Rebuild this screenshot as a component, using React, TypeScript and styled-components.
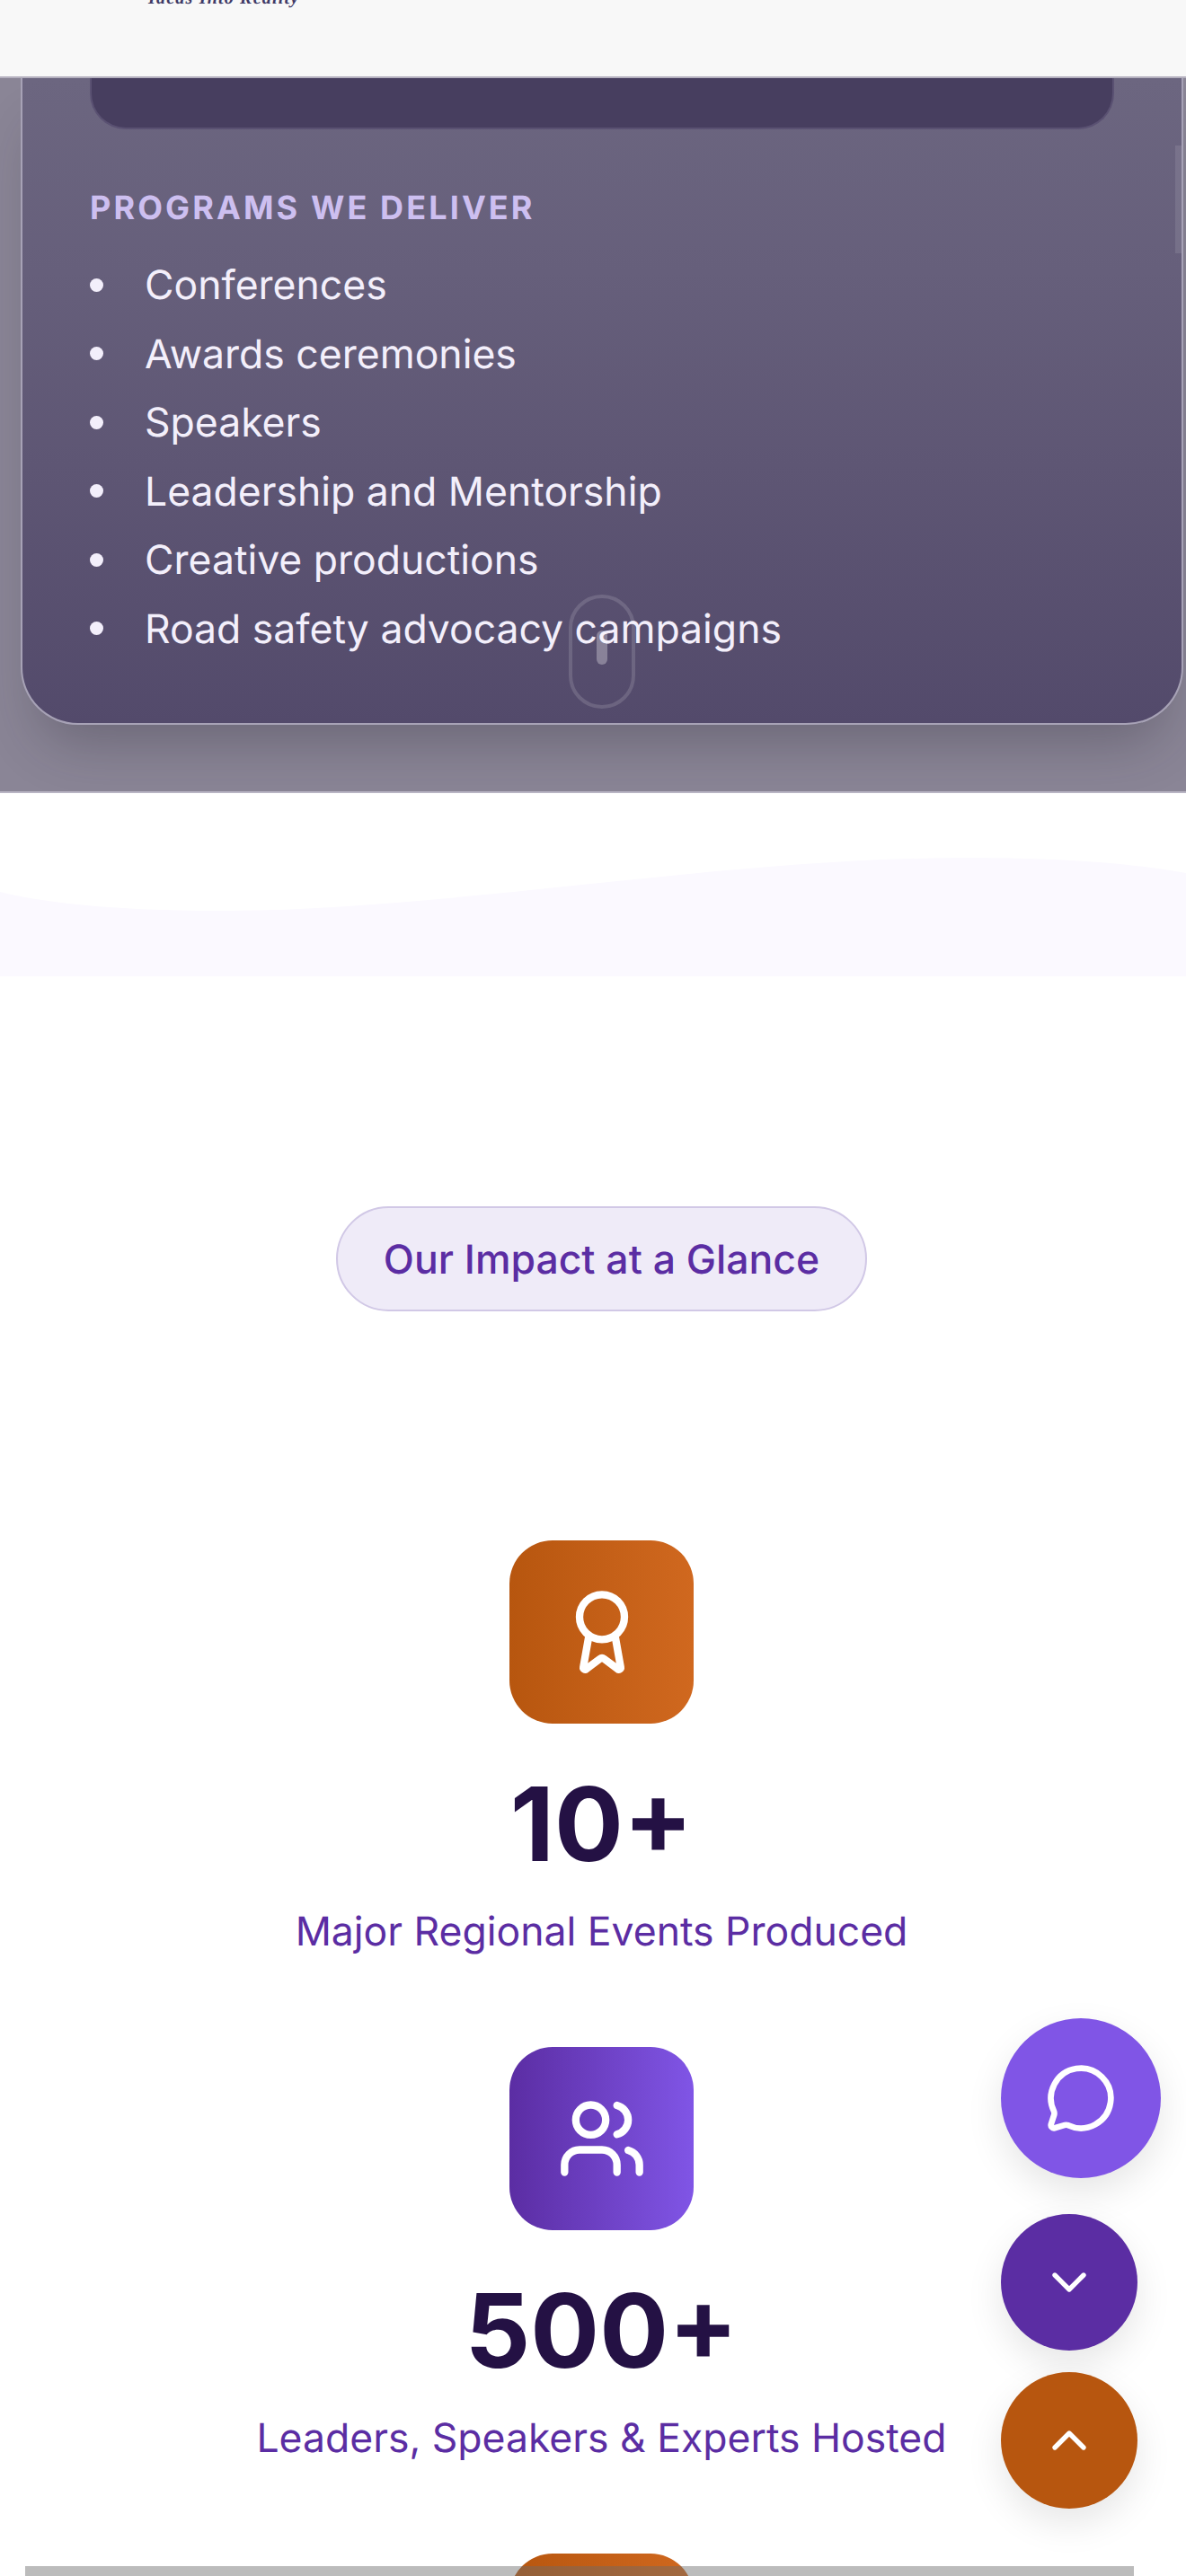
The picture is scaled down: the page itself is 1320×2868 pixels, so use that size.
import React from "react";
import styled, { createGlobalStyle } from "styled-components";
import { Award, Users, MessageCircle, ChevronDown, ChevronUp } from "lucide-react";

const Global = createGlobalStyle`
  html, body { margin: 0; padding: 0; background: #fff; }
  body { font-family: Inter, "Noto Sans", sans-serif; text-rendering: geometricPrecision; }
  #root { height: 2868px; overflow: hidden; position: relative; }
`;

const Page = styled.div`
  position: relative;
  width: 1320px;
  height: 2868px;
  overflow: hidden;
  background: #fff;
`;

const Header = styled.header`
  position: relative;
  height: 85px;
  background: #f8f8f8;
  border-bottom: 2px solid #b5b1bf;
  box-sizing: content-box;
  overflow: hidden;
  z-index: 2;
`;

const Tagline = styled.div`
  position: absolute;
  left: 165px;
  top: -12px;
  font: italic 700 20px "Liberation Serif", serif;
  letter-spacing: 1.2px;
  line-height: 20px;
  white-space: nowrap;
  color: #3f3a66;
`;

const HeroBand = styled.section`
  height: 796px;
  box-sizing: border-box;
  padding: 0 3px 0 23px;
  background: #8a8596;
  border-bottom: 2px solid #b9b5c4;
  overflow: hidden;
`;

const ProgramCard = styled.div`
  position: relative;
  height: 720px;
  box-sizing: border-box;
  padding: 0 75px;
  background: linear-gradient(180deg, #6c6680 0%, #665f7b 30%, #5e5674 60%, #534a6b 100%);
  border: 2px solid #a7a2b6;
  border-top: none;
  border-radius: 0 0 64px 64px;
  box-shadow: 0 40px 60px -20px rgba(40, 36, 50, 0.3);
`;

const InnerPanel = styled.div`
  height: 57px;
  box-sizing: border-box;
  background: #473e5f;
  border: 2px solid #5a5172;
  border-top: none;
  border-radius: 0 0 40px 40px;
`;

const SectionLabel = styled.h3`
  margin: 65px 0 26px;
  font-size: 36px;
  line-height: 44px;
  font-weight: 700;
  letter-spacing: 3.12px;
  text-transform: uppercase;
  color: #cdbff0;
`;

const ProgramList = styled.ul`
  margin: 0;
  padding: 0;
  list-style: none;
`;

const ProgramItem = styled.li`
  display: flex;
  align-items: center;
  gap: 46px;
  height: 76.5px;
  font-size: 44.5px;
  color: #f3effb;
  &::before {
    content: "";
    width: 15px;
    height: 15px;
    border-radius: 50%;
    background: #f3effb;
    flex: none;
  }
`;

const Mouse = styled.div`
  position: absolute;
  left: 50%;
  bottom: 16px;
  width: 74px;
  height: 127px;
  box-sizing: border-box;
  transform: translateX(-50%);
  display: flex;
  justify-content: center;
  padding-top: 36px;
  border: 4px solid rgba(255, 255, 255, 0.14);
  border-radius: 37px;
`;

const MouseDot = styled.span`
  width: 12px;
  height: 38px;
  border-radius: 6px;
  background: rgba(255, 255, 255, 0.3);
`;

const ScrollThumb = styled.div`
  position: absolute;
  right: 5px;
  top: 162px;
  width: 7px;
  height: 120px;
  background: rgba(255, 255, 255, 0.1);
  z-index: 1;
`;

const WaveBand = styled.div`
  height: 204px;
  line-height: 0;
`;

const ImpactSection = styled.section`
  display: flex;
  flex-direction: column;
  align-items: center;
  padding: 256px 0 0 19px;
`;

const ImpactPill = styled.div`
  width: 591px;
  height: 117px;
  box-sizing: border-box;
  display: flex;
  align-items: center;
  justify-content: center;
  border: 2px solid #d1c8e6;
  border-radius: 59px;
  background: #efebf8;
  color: #5b2da3;
  font-size: 44.5px;
  font-weight: 500;
`;

const StatList = styled.div`
  margin-top: 255px;
  display: flex;
  flex-direction: column;
  align-items: center;
  gap: 96px;
`;

const Stat = styled.div`
  display: flex;
  flex-direction: column;
  align-items: center;
`;

const StatTile = styled.div<{ $tone: "orange" | "purple" }>`
  width: 205px;
  height: 204px;
  flex: none;
  border-radius: 48px;
  display: flex;
  align-items: center;
  justify-content: center;
  color: #fff;
  background: ${(p) =>
    p.$tone === "orange"
      ? "linear-gradient(90deg, #b7560f, #d0681f)"
      : "linear-gradient(90deg, #5b2da3, #8055e6)"};
`;

const StatValue = styled.div`
  margin-top: 46px;
  font-size: 114px;
  line-height: 134px;
  font-weight: 700;
  color: #241144;
`;

const StatCaption = styled.div`
  margin-top: 18px;
  font-size: 44.5px;
  line-height: 66px;
  color: #5b2da3;
  white-space: nowrap;
`;

const FabStack = styled.div`
  position: absolute;
  left: 1114px;
  top: 2247px;
  display: flex;
  flex-direction: column;
  align-items: flex-start;
  z-index: 3;
`;

const Fab = styled.button<{ $size: number; $bg: string; $gap: number }>`
  width: ${(p) => p.$size}px;
  height: ${(p) => p.$size}px;
  margin-bottom: ${(p) => p.$gap}px;
  padding: 0;
  border: none;
  border-radius: 50%;
  display: flex;
  align-items: center;
  justify-content: center;
  color: #fff;
  background: ${(p) => p.$bg};
  box-shadow: 0 16px 40px rgba(0, 0, 0, 0.1);
`;

const BottomVeil = styled.div`
  position: absolute;
  left: 28px;
  width: 1234px;
  top: 2857px;
  height: 11px;
  background: rgba(107, 107, 107, 0.45);
  z-index: 2;
`;

const stats = [
  { tone: "orange" as const, Icon: Award, value: "10+", caption: "Major Regional Events Produced" },
  { tone: "purple" as const, Icon: Users, value: "500+", caption: "Leaders, Speakers & Experts Hosted" },
  { tone: "orange" as const, Icon: Award, value: "", caption: "" },
];

const programs = [
  "Conferences",
  "Awards ceremonies",
  "Speakers",
  "Leadership and Mentorship",
  "Creative productions",
  "Road safety advocacy campaigns",
];

export default function App() {
  return (
    <Page>
      <Global />
      <Header>
        <Tagline>Ideas Into Reality</Tagline>
      </Header>
      <ScrollThumb />
      <HeroBand>
        <ProgramCard>
          <InnerPanel />
          <SectionLabel>Programs we deliver</SectionLabel>
          <ProgramList>
            {programs.map((p) => (
              <ProgramItem key={p}>{p}</ProgramItem>
            ))}
          </ProgramList>
          <Mouse>
            <MouseDot />
          </Mouse>
        </ProgramCard>
      </HeroBand>
      <WaveBand>
        <svg width="1320" height="204" viewBox="0 0 1320 204">
          <path
            d="M0 110C60 125 150 131 244 131C500 131 800 72 1077 72C1180 72 1260 78 1320 89L1320 204L0 204Z"
            fill="#fbf9ff"
          />
        </svg>
      </WaveBand>
      <ImpactSection>
        <ImpactPill>Our Impact at a Glance</ImpactPill>
        <StatList>
          {stats.map(({ tone, Icon, value, caption }, i) => (
            <Stat key={i}>
              <StatTile $tone={tone}>
                <Icon size={100} strokeWidth={2} />
              </StatTile>
              {value && <StatValue>{value}</StatValue>}
              {caption && <StatCaption>{caption}</StatCaption>}
            </Stat>
          ))}
        </StatList>
      </ImpactSection>
      <FabStack>
        <Fab $size={178} $bg="#8055e6" $gap={40}>
          <MessageCircle size={80} strokeWidth={2} />
        </Fab>
        <Fab $size={152} $bg="#5b2da3" $gap={24}>
          <ChevronDown size={64} strokeWidth={2} />
        </Fab>
        <Fab $size={152} $bg="#b7560f" $gap={0}>
          <ChevronUp size={64} strokeWidth={2} />
        </Fab>
      </FabStack>
      <BottomVeil />
    </Page>
  );
}
